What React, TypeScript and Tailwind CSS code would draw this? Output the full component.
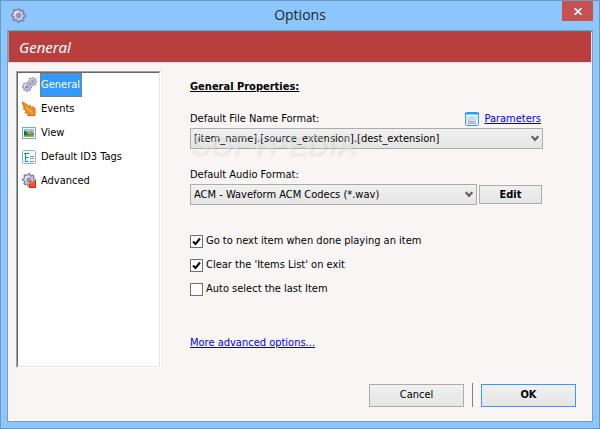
import { useState, type ReactNode, type SelectHTMLAttributes } from 'react';

const GEAR =
  'M6.9 1h2.2l.4 1.9 1.3.5 1.6-1.1 1.5 1.6-1 1.6.5 1.3 1.9.4v2l-1.9.5-.5 1.3 1 1.6-1.5 1.5-1.6-1-1.3.5L9.1 15H6.9l-.4-1.9-1.3-.5-1.6 1-1.5-1.5 1-1.6-.5-1.3L.7 8.700V6.700l1.900-.4.5-1.300-1-1.600 1.500-1.600 1.600 1.100 1.300-.5z';

function Gear({ x = 0, y = 0, size = 16 }: { x?: number; y?: number; size?: number }) {
  return (
    <svg x={x} y={y} width={size} height={size} viewBox="0 0 16 16">
      <path d={GEAR} fill="#c3c3de" stroke="#77759b" strokeWidth="1.200" strokeLinejoin="round" />
      <path d="M3.500 8a4.500 4.500 0 0 1 4.500-4.500" fill="none" stroke="#eeeefa" strokeWidth="1.500" />
      <circle cx="8" cy="8" r="2" fill="#8fa9c8" stroke="#77759b" />
    </svg>
  );
}

function GearIcon() {
  return (
    <svg className="size-4" viewBox="0 0 16 16" aria-hidden="true">
      <Gear x={1} y={1} size={15} />
    </svg>
  );
}

function GearsIcon() {
  return (
    <svg className="size-4" viewBox="0 0 16 16" aria-hidden="true">
      <Gear x={7} y={0} size={9} />
      <Gear x={1} y={5} size={10} />
    </svg>
  );
}

function EventsIcon() {
  return (
    <svg className="size-4" viewBox="0 0 16 16" aria-hidden="true">
      <path
        d="M1 1l5 2.500L7.500 6l1-2L10.500 7l1.500-1.500.5 2.500 1.500-1V14.500H6.500L8 13 4 11.500 5.500 10 2 7.500 3.500 7z"
        fill="#fb8a1c"
        stroke="#e8641f"
        strokeLinejoin="round"
      />
      <path d="M5 6l2 2.500 2 1 3 3.500" fill="none" stroke="#ffc04a" strokeWidth="1.500" />
    </svg>
  );
}

function ViewIcon() {
  return (
    <svg className="size-4" viewBox="0 0 16 16" aria-hidden="true">
      <rect x="1.500" y="2.500" width="13" height="11" fill="#f4faff" stroke="#7ba7cf" />
      <rect x="3" y="4" width="10" height="8" fill="#8ccdf4" />
      <path d="M3 5.500q3 0 5 3.500l5-1v4H3z" fill="#3f9442" />
      <path d="M3 6q3 1 4 3l-4 1z" fill="#1d6d4c" />
      <path d="M3 11l10-1v2H3z" fill="#8ab94c" />
      <circle cx="10" cy="7.500" r="1.800" fill="#f5762a" />
    </svg>
  );
}

function TagsIcon() {
  return (
    <svg className="size-4" viewBox="0 0 16 16" aria-hidden="true">
      <rect x="1.500" y="1.500" width="13" height="13" rx="1" fill="#f3faff" stroke="#8db4d8" />
      <path d="M3 4.500h5M4.500 4.500v8M4.500 8.500h3M4.500 12.500h3" fill="none" stroke="#1686c9" />
      <path d="M9 7.500h4M9 9.500h4M9 12.500h4" stroke="#8b969f" />
    </svg>
  );
}

function AdvancedIcon() {
  return (
    <svg className="size-4" viewBox="0 0 16 16" aria-hidden="true">
      <Gear x={1} y={0} size={14} />
      <rect x="8.500" y="8.500" width="6" height="6" fill="#f0532a" stroke="#cf2f14" />
      <path d="M9 11V9h4" fill="none" stroke="#ff9b68" />
    </svg>
  );
}

function ParametersIcon() {
  return (
    <svg className="size-4" viewBox="0 0 16 16" aria-hidden="true">
      <rect x="1.500" y="1.500" width="13" height="13" rx="1" fill="#e2effc" stroke="#3b9df0" />
      <path d="M1 2h14v2H1z" fill="#169af5" />
      <path d="M2 3.500h12" stroke="#8fd6ff" />
      <path d="M3.500 5.500h9v3l-9 3z" fill="#c5dcf4" />
      <rect x="4.500" y="10.500" width="3" height="2" rx="1" fill="#fff" stroke="#76808c" />
      <rect x="8.500" y="10.500" width="3" height="2" rx="1" fill="#fff" stroke="#76808c" />
    </svg>
  );
}

function ComboBox({ children, ...rest }: SelectHTMLAttributes<HTMLSelectElement>) {
  return (
    <div className="relative min-w-0 flex-1">
      <select
        {...rest}
        className="block h-[21px] w-full appearance-none border border-[#acacac] bg-linear-to-b from-[#f0f0f0] to-[#e5e5e5] pr-5 pl-[3px] outline-none"
      >
        {children}
      </select>
      <svg
        className="pointer-events-none absolute top-[7px] right-1 h-[7px] w-2"
        viewBox="0 0 8 7"
        aria-hidden="true"
      >
        <path d="M.7 1.200L4 4.800l3.300-3.600" fill="none" stroke="#606060" strokeWidth="2.200" />
      </svg>
    </div>
  );
}

function CheckRow({ label, initial }: { label: string; initial: boolean }) {
  const [checked, setChecked] = useState(initial);
  return (
    <label className="flex h-6 items-center gap-[3px]">
      <span className="relative size-[13px]">
        <input
          type="checkbox"
          checked={checked}
          onChange={() => setChecked(!checked)}
          className="block size-[13px] appearance-none border border-[#707070] bg-white"
        />
        {checked && (
          <svg className="pointer-events-none absolute inset-0" viewBox="0 0 13 13" aria-hidden="true">
            <path d="M3 6.500l2.500 2.500L10 3.500" fill="none" stroke="#000" strokeWidth="2" />
          </svg>
        )}
      </span>
      {label}
    </label>
  );
}

const pages: { name: string; icon: ReactNode }[] = [
  { name: 'General', icon: <GearsIcon /> },
  { name: 'Events', icon: <EventsIcon /> },
  { name: 'View', icon: <ViewIcon /> },
  { name: 'Default ID3 Tags', icon: <TagsIcon /> },
  { name: 'Advanced', icon: <AdvancedIcon /> },
];

export default function App() {
  const [page, setPage] = useState('General');
  return (
    <div className="flex min-h-screen flex-col border border-[#6b9ac4] bg-[#8cc6fa] px-1.5 pb-1.5 font-['DejaVu_Sans_Condensed','DejaVu_Sans',sans-serif] text-[11px] leading-4 text-black">
      <header className="grid h-[29px] grid-cols-[1fr_auto_1fr] items-start">
        <span className="pt-1.5 pl-[3px]">
          <GearIcon />
        </span>
        <h1 className="pt-1 font-['Open_Sans',sans-serif] text-sm leading-5 text-[#1c2833]">Options</h1>
        <button
          aria-label="Close"
          className="flex h-5 w-[31px] items-center justify-center justify-self-end bg-[#c75050]"
        >
          <svg className="h-[7px] w-2" viewBox="0 0 8 7" aria-hidden="true">
            <path d="M.5 0l7 7M7.500 0l-7 7" stroke="#fff" strokeWidth="1.700" />
          </svg>
        </button>
      </header>

      <div className="flex flex-1 flex-col border border-[#759fc8] bg-[#faf5f5]">
        <h2 className="flex h-8 items-center border-t border-r border-b border-l border-t-[#696969] border-r-[#e3e3e3] border-b-[#e3e3e3] border-l-[#a0a0a0] bg-[#b93f3f] pl-2.5 font-['Noto_Sans',sans-serif] text-[15px] text-white italic">
          {page}
        </h2>

        <div className="flex flex-1 pt-2 pl-2">
          <nav className="h-[297px] w-[145px] border border-t-[#a0a0a0] border-r-white border-b-white border-l-[#a0a0a0]">
            <ul className="h-full border border-t-[#696969] border-r-[#e3e3e3] border-b-[#e3e3e3] border-l-[#696969] bg-white">
              {pages.map((p) => (
                <li key={p.name}>
                  <button onClick={() => setPage(p.name)} className="flex h-6 items-center gap-[3px] pl-[3px]">
                    {p.icon}
                    <span
                      className={
                        p.name === page
                          ? 'flex h-6 items-center border border-dotted border-[#c06a10] bg-[#3399ff] pr-px text-white'
                          : 'flex h-6 items-center border border-transparent'
                      }
                    >
                      {p.name}
                    </span>
                  </button>
                </li>
              ))}
            </ul>
          </nav>

          <main className="flex flex-1 flex-col pl-[29px]">
            <div className="flex flex-col pr-[49px]">
              <h3 className="pt-2 font-bold underline">General Properties:</h3>

              <div className="flex items-end justify-between pt-4">
                <label htmlFor="file-format">Default File Name Format:</label>
                <a href="#parameters" className="flex items-center gap-1 pr-0.5 text-[#0000ff] underline">
                  <ParametersIcon />
                  Parameters
                </a>
              </div>
              <div className="relative flex pt-px">
                <ComboBox id="file-format">
                  <option>[item_name].[source_extension].[dest_extension]</option>
                </ComboBox>
                <span className="pointer-events-none absolute top-1 left-0 font-['Liberation_Sans',sans-serif] text-[29px] leading-7 font-bold text-white/35 [text-shadow:1px_1px_2px_rgba(0,0,0,0.08)]">
                  SOFTPEDIA
                  <span className="absolute top-0 left-full text-[8px] leading-2 font-normal">®</span>
                </span>
              </div>

              <label htmlFor="audio-format" className="pt-[18px]">
                Default Audio Format:
              </label>
              <div className="flex items-center gap-0.5 pt-px pr-px">
                <ComboBox id="audio-format">
                  <option>ACM - Waveform ACM Codecs (*.wav)</option>
                </ComboBox>
                <button className="h-[19px] w-[63px] border border-[#acacac] bg-linear-to-b from-[#f0f0f0] to-[#e5e5e5] leading-4 font-bold">
                  Edit
                </button>
              </div>

              <div className="pt-6">
                <CheckRow label="Go to next item when done playing an item" initial={true} />
                <CheckRow label="Clear the 'Items List' on exit" initial={true} />
                <CheckRow label="Auto select the last Item" initial={false} />
              </div>

              <a href="#advanced" className="self-start pt-[34px] text-[#0000ff] underline">
                More advanced options...
              </a>
            </div>
          </main>
        </div>

        <footer className="flex items-center justify-end gap-2 pr-4 pb-3.5">
          <button className="h-[23px] w-[95px] border border-[#acacac] bg-linear-to-b from-[#f0f0f0] to-[#e5e5e5]">
            Cancel
          </button>
          <span className="h-6 w-px bg-[#828282]" />
          <button className="h-[23px] w-[95px] border border-[#3399ff] bg-linear-to-b from-[#f0f0f0] to-[#e5e5e5] font-bold">
            OK
          </button>
        </footer>
      </div>
    </div>
  );
}
